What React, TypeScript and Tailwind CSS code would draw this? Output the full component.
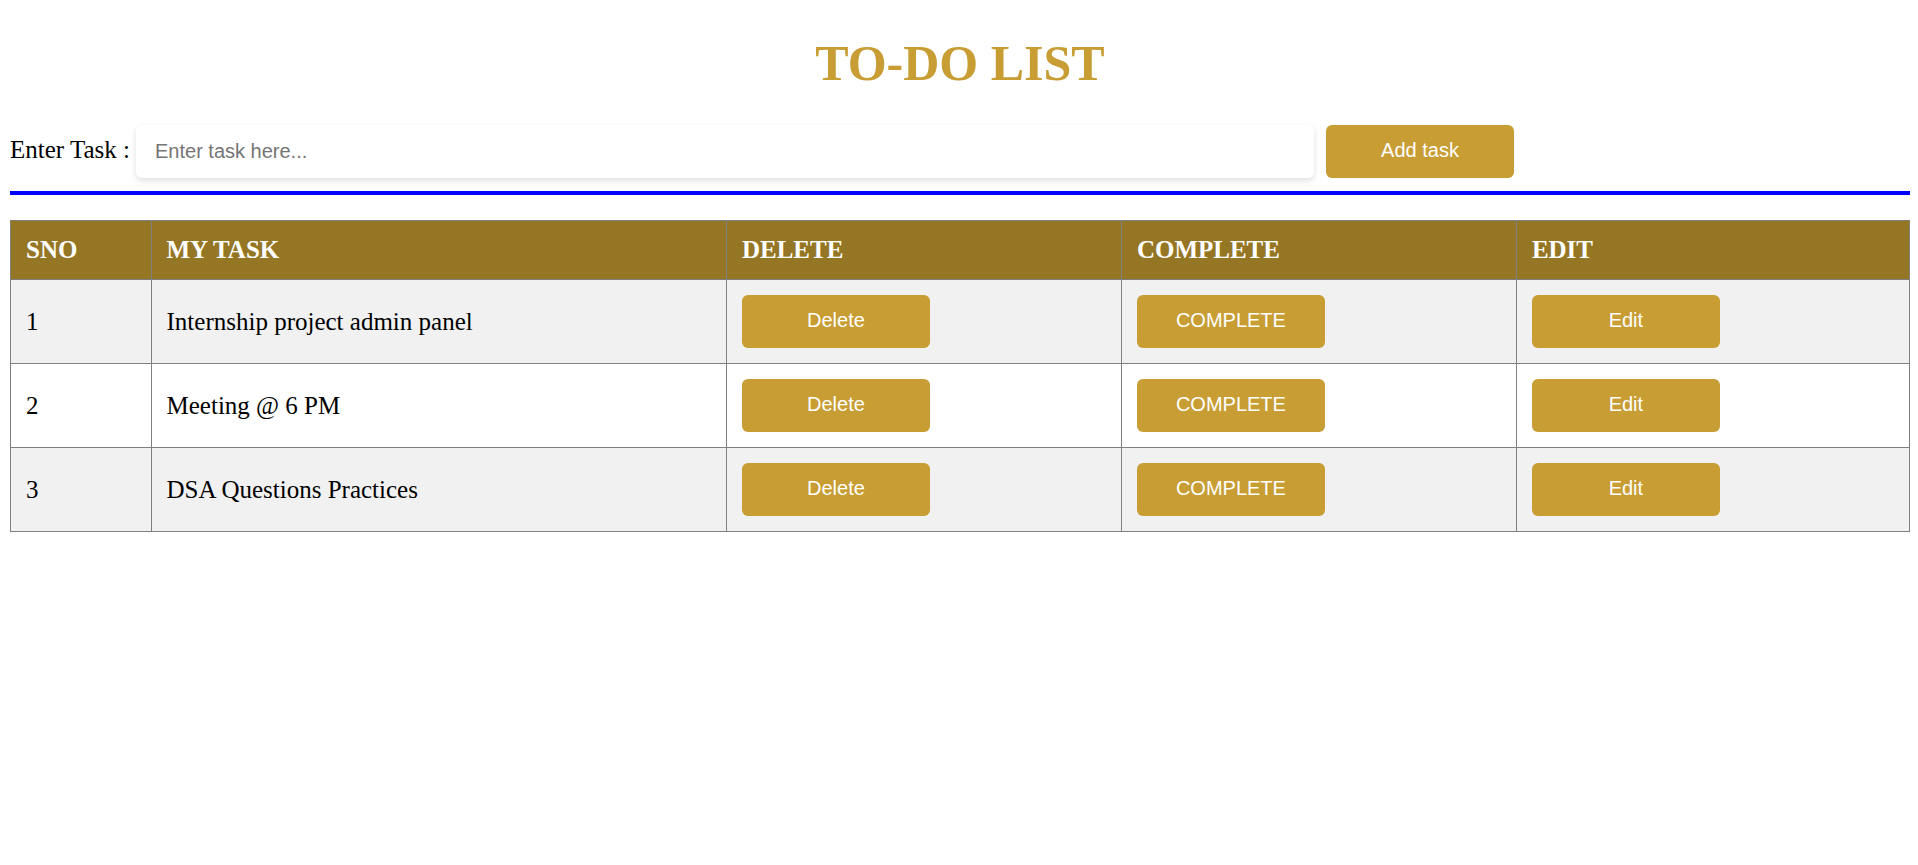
import { useState } from "react";
import type { ReactNode } from "react";

const initialTasks = [
  "Internship project admin panel",
  "Meeting @ 6 PM",
  "DSA Questions Practices",
];

const columns = [
  { label: "SNO", width: "w-[7.4%]" },
  { label: "MY TASK", width: "w-[30.3%]" },
  { label: "DELETE", width: "w-[20.8%]" },
  { label: "COMPLETE", width: "w-[20.8%]" },
  { label: "EDIT", width: "w-[20.7%]" },
];

function GoldButton({
  children,
  type = "button",
  onClick,
}: {
  children: ReactNode;
  type?: "button" | "submit";
  onClick?: () => void;
}) {
  return (
    <button
      type={type}
      onClick={onClick}
      className="block h-[53px] w-[188px] cursor-pointer rounded-md bg-[#c79d34] pb-[3px] font-['Liberation_Sans',Arial,sans-serif] text-xl text-white"
    >
      {children}
    </button>
  );
}

export default function App() {
  const [tasks, setTasks] = useState(initialTasks);
  const [draft, setDraft] = useState("");

  const removeTask = (index: number) =>
    setTasks(tasks.filter((_, i) => i !== index));

  return (
    <main className="pt-[35px] pr-2 pl-[10px] font-['Liberation_Serif','Times_New_Roman',serif] text-[25px] leading-7 text-black">
      <h1 className="text-center text-[50px] leading-[56px] font-bold text-[#c79d34]">
        TO-DO LIST
      </h1>

      <form
        className="mt-[34px] flex items-center"
        onSubmit={(event) => {
          event.preventDefault();
          if (!draft.trim()) return;
          setTasks([...tasks, draft.trim()]);
          setDraft("");
        }}
      >
        <label htmlFor="task" className="mr-[6px] pb-1 whitespace-nowrap">
          Enter Task :
        </label>
        <input
          id="task"
          type="text"
          placeholder="Enter task here..."
          value={draft}
          onChange={(event) => setDraft(event.target.value)}
          className="mr-3 h-[53px] w-[62%] rounded-md bg-white px-[19px] font-['Liberation_Sans',Arial,sans-serif] text-xl shadow-[0_3px_6px_rgba(0,0,0,0.12)] placeholder:text-[#757575]"
        />
        <GoldButton type="submit">Add task</GoldButton>
      </form>

      <hr className="mt-[13px] mb-[25px] border-0 border-t-4 border-[#0000ff]" />

      <table className="w-full table-fixed border-collapse text-left">
        <thead>
          <tr className="bg-[#957624] text-white">
            {columns.map((column) => (
              <th
                key={column.label}
                scope="col"
                className={`${column.width} border border-[#808080] p-[15px] font-bold`}
              >
                {column.label}
              </th>
            ))}
          </tr>
        </thead>
        <tbody>
          {tasks.map((task, index) => (
            <tr key={`${index}-${task}`} className="odd:bg-[#f1f1f1]">
              <td className="border border-[#808080] p-[15px]">{index + 1}</td>
              <td className="border border-[#808080] p-[15px]">{task}</td>
              <td className="border border-[#808080] p-[15px]">
                <GoldButton onClick={() => removeTask(index)}>Delete</GoldButton>
              </td>
              <td className="border border-[#808080] p-[15px]">
                <GoldButton onClick={() => removeTask(index)}>COMPLETE</GoldButton>
              </td>
              <td className="border border-[#808080] p-[15px]">
                <GoldButton
                  onClick={() => {
                    setDraft(task);
                    removeTask(index);
                  }}
                >
                  Edit
                </GoldButton>
              </td>
            </tr>
          ))}
        </tbody>
      </table>
    </main>
  );
}
